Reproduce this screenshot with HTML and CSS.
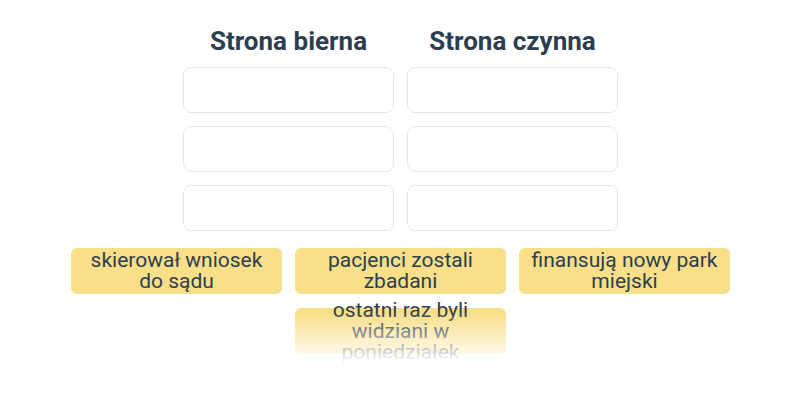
FILE: index.html
```html
<!DOCTYPE html>
<html lang="pl">
  <head>
    <meta charset="UTF-8" />
    <meta name="viewport" content="width=device-width, initial-scale=1.0" />
    <title>Strona bierna / Strona czynna</title>
    <link rel="stylesheet" href="styles.css">
  </head>
  <body>
    <div class="board">
      <div class="columns">
        <div class="column">
          <h2>Strona bierna</h2>
          <div class="slot"></div>
          <div class="slot"></div>
          <div class="slot"></div>
        </div>
        <div class="column">
          <h2>Strona czynna</h2>
          <div class="slot"></div>
          <div class="slot"></div>
          <div class="slot"></div>
        </div>
      </div>

      <div class="pool">
        <div class="card">skierował wniosek do sądu</div>
        <div class="card">pacjenci zostali zbadani</div>
        <div class="card">finansują nowy park miejski</div>
        <div class="card">ostatni raz byli widziani w poniedziałek</div>
      </div>
    </div>
  </body>
</html>
```

FILE: styles.css
```css
body {
  margin: 0;
  font-family: Roboto, "Noto Sans", Arial, sans-serif;
  background-color: #fff;
  color: #2d3e50;
}
.board {
  position: relative;
  width: 800px;
  height: 368px;
  padding-left: 1px;
  box-sizing: border-box;
}
/* fade out the bottom of the card pool */
.board::after {
  content: "";
  position: absolute;
  left: 0;
  right: 0;
  bottom: 0;
  height: 56px;
  background: linear-gradient(rgba(255, 255, 255, 0), rgba(255, 255, 255, 0.92) 85%, #fff);
  pointer-events: none;
}
.columns {
  display: flex;
  justify-content: center;
  gap: 13px;
  padding-top: 25px;
}
.column {
  display: flex;
  flex-direction: column;
  gap: 13px;
  width: 211px;
}
h2 {
  margin: 0 0 -3px;
  font-size: 26px;
  font-weight: 700;
  line-height: 32px;
  text-align: center;
  color: #2d3e50;
}
.slot {
  height: 46px;
  border: 1.5px solid #e3e8ee;
  border-radius: 8px;
  box-sizing: border-box;
}
.pool {
  display: flex;
  flex-wrap: wrap;
  justify-content: center;
  gap: 14px 13px;
  margin-top: 17px;
}
.card {
  display: flex;
  align-items: center;
  justify-content: center;
  width: 211px;
  height: 46px;
  padding: 0 10px;
  box-sizing: border-box;
  background-color: #f8df88;
  border-radius: 6px;
  font-size: 21px;
  line-height: 21px;
  text-align: center;
  color: #2d3e50;
}
```
